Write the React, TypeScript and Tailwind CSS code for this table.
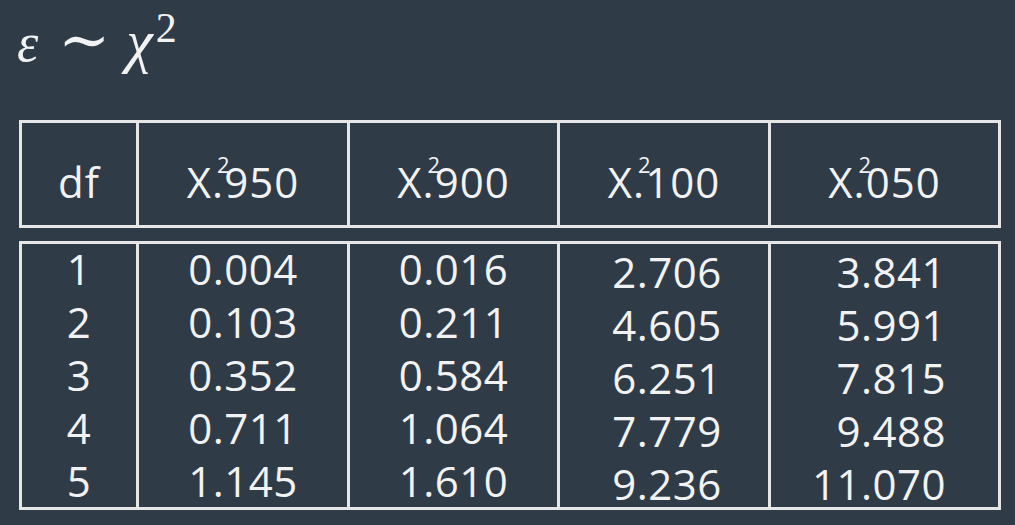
const heads = [".950", ".900", ".100", ".050"]

const rows = [
  ["1", "0.004", "0.016", "2.706", "3.841"],
  ["2", "0.103", "0.211", "4.605", "5.991"],
  ["3", "0.352", "0.584", "6.251", "7.815"],
  ["4", "0.711", "1.064", "7.779", "9.488"],
  ["5", "1.145", "1.610", "9.236", "11.070"],
]

const cols = "grid grid-cols-[114px_211px_210px_211px_230px]"

const ChiHead = ({ sub }: { sub: string }) => (
  <span className="whitespace-nowrap">
    X
    <span className="relative">
      .
      <span className="absolute left-[5px] top-[0px] text-[22px] leading-[22px] tracking-normal">2</span>
    </span>
    {sub.slice(1)}
  </span>
)

const App = () => {
  return (
    <div className="w-[1015px] h-[525px] overflow-hidden bg-[#2f3b47] text-[#f2f2f2] font-['Open_Sans',sans-serif]">
      {/* title formula */}
      <div className="h-[120px] pl-[17px] pt-[7px] font-['Liberation_Serif','DejaVu_Serif',serif] text-[54px] leading-[54px] whitespace-nowrap">
        <span className="italic">ε</span>
        <span className="ml-[20px] font-['DejaVu_Serif',serif] text-[62px]">∼</span>
        <span className="ml-[16px] italic text-[60px]">χ</span>
        <span className="ml-[3px] text-[42px] leading-[42px] align-[19px]">2</span>
      </div>

      {/* header */}
      <div className={`${cols} ml-[19px] w-[982px] h-[108px] border-[3px] border-[#e6e6e6] text-[42px] leading-[42px] tracking-[1px]`}>
        <div className="pt-[38px] text-center">df</div>
        {heads.map((h) => (
          <div key={h} className="pt-[38px] text-center border-l-[3px] border-[#e6e6e6]">
            <ChiHead sub={h} />
          </div>
        ))}
      </div>

      {/* values */}
      <div className={`${cols} ml-[19px] mt-[13px] w-[982px] h-[269px] border-[3px] border-[#e6e6e6] text-[42px] leading-[53px] tracking-[0.5px]`}>
        {[0, 1, 2, 3, 4].map((c) => (
          <div
            key={c}
            className={
              c === 0
                ? "text-center"
                : c === 4
                ? "text-right pr-[52px] border-l-[3px] border-[#e6e6e6]"
                : c === 3
                ? "text-center pl-[6px] border-l-[3px] border-[#e6e6e6]"
                : "text-center border-l-[3px] border-[#e6e6e6]"
            }
          >
            <div className={c > 2 ? "mt-[1px]" : "-mt-[2px]"}>
              {rows.map((r) => (
                <div key={r[0]}>{r[c]}</div>
              ))}
            </div>
          </div>
        ))}
      </div>
    </div>
  )
}

export default App
